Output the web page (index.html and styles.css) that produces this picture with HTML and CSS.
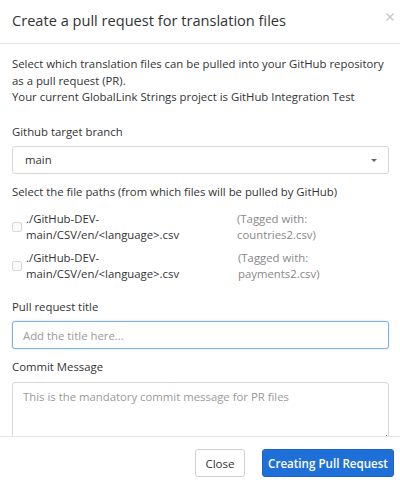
FILE: index.html
```html
<!DOCTYPE html>
<html lang="en">
<head>
<meta charset="utf-8">
<title>Create a pull request</title>
<link rel="stylesheet" href="styles.css">
</head>
<body>
<div class="modal">
  <div class="modal-header">
    <h4 class="modal-title">Create a pull request for translation files</h4>
    <button class="close" type="button" aria-label="Close">
      <svg width="8" height="8" viewBox="0 0 8 8"><path d="M0.5 0.5 L7.5 7.5 M7.5 0.5 L0.5 7.5" stroke="#c4c4c4" stroke-width="1.3" fill="none"/></svg>
    </button>
  </div>
  <div class="modal-body">
    <p class="intro">Select which translation files can be pulled into your GitHub repository as a pull request (PR).<br>Your current GlobalLink Strings project is GitHub Integration Test</p>

    <div class="form-group">
      <label class="label">Github target branch</label>
      <div class="select">
        <span>main</span>
        <span class="caret"></span>
      </div>
    </div>

    <div class="form-group files">
      <label class="label">Select the file paths (from which files will be pulled by GitHub)</label>
      <div class="file-row">
        <div class="file-path">
          <span class="checkbox"></span>
          <span class="path-text">./GitHub-DEV-main/CSV/en/&lt;language&gt;.csv</span>
        </div>
        <div class="file-tag">(Tagged with: countries2.csv)</div>
      </div>
      <div class="file-row">
        <div class="file-path">
          <span class="checkbox"></span>
          <span class="path-text">./GitHub-DEV-main/CSV/en/&lt;language&gt;.csv</span>
        </div>
        <div class="file-tag tag-2">(Tagged with: payments2.csv)</div>
      </div>
    </div>

    <div class="form-group">
      <label class="label">Pull request title</label>
      <input class="input focused" type="text" placeholder="Add the title here...">
    </div>

    <div class="form-group last">
      <label class="label">Commit Message</label>
      <textarea class="textarea" placeholder="This is the mandatory commit message for PR files"></textarea>
    </div>
  </div>
  <div class="modal-footer">
    <button class="btn btn-default" type="button">Close</button>
    <button class="btn btn-primary" type="button">Creating Pull Request</button>
  </div>
</div>
</body>
</html>
```

FILE: styles.css
```css
* {
  box-sizing: border-box;
}

html, body {
  margin: 0;
  padding: 0;
  background: #ffffff;
}

body {
  font-family: "Open Sans", "Liberation Sans", sans-serif;
  font-size: 11.35px;
  line-height: 16.5px;
  color: #333333;
}

.modal {
  width: 400px;
  height: 482px;
  display: flex;
  flex-direction: column;
  overflow: hidden;
  background: #fff;
}

.modal-header {
  height: 44px;
  flex: 0 0 auto;
  display: flex;
  align-items: flex-start;
  justify-content: space-between;
  padding: 9px 6px 0 12px;
  border-bottom: 1px solid #e5e5e5;
}

.modal-title {
  margin: 0;
  font-size: 14.6px;
  font-weight: 400;
  line-height: 22px;
  color: #333;
}

.close {
  border: 0;
  background: transparent;
  padding: 0;
  margin-top: 4px;
  width: 8px;
  height: 8px;
  display: flex;
}

.modal-body {
  flex: 1 1 auto;
  overflow: hidden;
  padding: 12px 11px 0 12px;
}

.intro {
  margin: 0 0 18px;
}

.form-group {
  margin-bottom: 10px;
}

.label {
  display: block;
  margin-bottom: 6px;
}

.select {
  height: 28px;
  border: 1px solid #d6d6d6;
  border-radius: 3px;
  display: flex;
  align-items: center;
  justify-content: space-between;
  padding: 0 11px 0 12px;
  color: #333;
}

.caret {
  width: 0;
  height: 0;
  border-left: 3px solid transparent;
  border-right: 3px solid transparent;
  border-top: 3px solid #666;
}

.files .label {
  margin-bottom: 10px;
}

.file-row {
  display: flex;
  align-items: flex-start;
  margin-bottom: 6px;
}

.file-path {
  width: 225px;
  flex: 0 0 auto;
  display: flex;
  align-items: center;
}

.checkbox {
  width: 10px;
  height: 10px;
  border: 1px solid #d8d8d8;
  border-radius: 2px;
  background: #fafafa;
  flex: 0 0 auto;
  margin-right: 4px;
}

.path-text {
  width: 180px;
}

.file-tag {
  width: 100px;
  color: #888;
}

.tag-2 {
  margin-left: 1px;
}

.files {
  margin-bottom: 16px;
}

.input {
  display: block;
  width: 100%;
  height: 28px;
  font: inherit;
  color: #333;
  padding: 0 10px;
  border: 1px solid #d6d6d6;
  border-radius: 3px;
  outline: none;
}

.input.focused {
  border-color: #7fb3e6;
  box-shadow: 0 0 2px rgba(102, 175, 233, 0.5);
}

.input::placeholder,
.textarea::placeholder {
  color: #9a9a9a;
}

.form-group.last {
  margin-bottom: 0;
}

.form-group + .form-group.last {
  margin-top: 7px;
}

.textarea {
  display: block;
  width: 100%;
  height: 62px;
  font: inherit;
  color: #333;
  padding: 6px 10px;
  border: 1px solid #d6d6d6;
  border-radius: 3px;
  resize: vertical;
  outline: none;
}

.modal-footer {
  flex: 0 0 auto;
  height: 46px;
  border-top: 1px solid #e5e5e5;
  display: flex;
  justify-content: flex-end;
  align-items: flex-start;
  gap: 17px;
  padding: 12px 6px 0 0;
}

.btn {
  font-family: "Open Sans", "Liberation Sans", sans-serif;
  font-size: 11.6px;
  height: 28px;
  border-radius: 3px;
  padding: 0;
  white-space: nowrap;
  cursor: pointer;
}

.btn-default {
  width: 50px;
  background: #fff;
  border: 1px solid #d0d0d0;
  color: #333;
}

.btn-primary {
  width: 132px;
  background: #1f6fd8;
  border: 1px solid #1b65c8;
  color: #fff;
  font-weight: 600;
}
```
